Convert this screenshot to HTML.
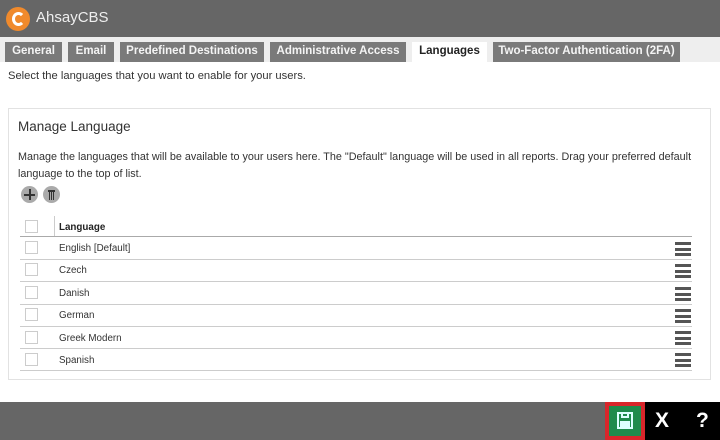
<!DOCTYPE html>
<html><head><style>
*{margin:0;padding:0;box-sizing:border-box}
body{width:720px;height:440px;overflow:hidden;background:#fff;font-family:"Liberation Sans",Arial,sans-serif;position:relative;color:#333}
.hdr{position:absolute;left:0;top:0;width:720px;height:37px;background:#666}
.logo{position:absolute;left:6px;top:7px;width:24px;height:24px;border-radius:50%;background:#f08a2c}
.brand{position:absolute;left:36px;top:9px;font-size:15px;color:#eee}
.tabbar{position:absolute;left:0;top:37px;width:720px;height:25px;background:#eee}
.tab{position:absolute;top:42px;height:20px;background:#7a7a7a;color:#f4f4f4;font-weight:bold;font-size:11.5px;line-height:19px;text-align:center}
.tab.on{background:#fff;color:#222}
.sel{position:absolute;left:8px;top:70px;font-size:11.2px;color:#333}
.panel{position:absolute;left:8px;top:108px;width:703px;height:272px;border:1px solid #e2e2e2}
.t{position:absolute;left:18px;top:119px;font-size:13.5px;color:#333}
.d{position:absolute;left:18px;top:149px;font-size:10.8px;line-height:17px;color:#333;width:690px}
.ic{position:absolute;top:186px;width:17px;height:17px;border-radius:50%;background:#aaa}
.line{position:absolute;left:20px;width:672px;height:1px;background:#ccc}
.cb{position:absolute;left:25px;width:13px;height:13px;border:1px solid #ccc;background:#fff}
.lt{position:absolute;left:59px;font-size:9.8px;color:#333}
.hb{position:absolute;left:675px;width:16px}
.hb i{display:block;height:3px;background:#555;margin-bottom:2.5px}
.ftr{position:absolute;left:0;top:402px;width:720px;height:38px;background:#666}
</style></head><body>
<div class="hdr"></div>
<div class="logo"><div style="position:absolute;left:6px;top:5px;width:13px;height:14px;border:3.5px solid #fff;border-right-color:transparent;border-radius:50%"></div></div>
<div class="brand">AhsayCBS</div>
<div class="tabbar"></div>
<div class="tab" style="left:5px;width:57px">General</div>
<div class="tab" style="left:68px;width:46px">Email</div>
<div class="tab" style="left:120px;width:144px">Predefined Destinations</div>
<div class="tab" style="left:270px;width:136px">Administrative Access</div>
<div class="tab on" style="left:412px;width:75px">Languages</div>
<div class="tab" style="left:493px;width:187px">Two-Factor Authentication (2FA)</div>
<div class="sel">Select the languages that you want to enable for your users.</div>
<div class="panel"></div>
<div class="t">Manage Language</div>
<div class="d">Manage the languages that will be available to your users here. The "Default" language will be used in all reports. Drag your preferred default language to the top of list.</div>
<div class="ic" style="left:21px"><div style="position:absolute;left:3px;top:7.5px;width:11px;height:2px;background:#333"></div><div style="position:absolute;left:7.5px;top:3px;width:2px;height:11px;background:#333"></div></div>
<div class="ic" style="left:43px"><div style="position:absolute;left:5px;top:4px;width:7px;height:2px;background:#333"></div><div style="position:absolute;left:5.5px;top:6px;width:6px;height:8px;background:repeating-linear-gradient(90deg,#333 0 1px,#aaa 1px 2px)"></div></div>
<div class="cb" style="top:220px"></div>
<div style="position:absolute;left:54px;top:216px;width:1px;height:20px;background:#ccc"></div>
<div class="lt" style="top:222px;font-weight:bold;color:#222">Language</div>
<div class="line" style="top:236px;background:#aaa"></div>

<div class="cb" style="top:241px"></div><div class="lt" style="top:243px">English [Default]</div><div class="hb" style="top:242px"><i></i><i></i><i></i></div><div class="line" style="top:259px"></div>
<div class="cb" style="top:263px"></div><div class="lt" style="top:265px">Czech</div><div class="hb" style="top:264px"><i></i><i></i><i></i></div><div class="line" style="top:281px"></div>
<div class="cb" style="top:286px"></div><div class="lt" style="top:288px">Danish</div><div class="hb" style="top:287px"><i></i><i></i><i></i></div><div class="line" style="top:304px"></div>
<div class="cb" style="top:308px"></div><div class="lt" style="top:310px">German</div><div class="hb" style="top:309px"><i></i><i></i><i></i></div><div class="line" style="top:326px"></div>
<div class="cb" style="top:331px"></div><div class="lt" style="top:333px">Greek Modern</div><div class="hb" style="top:331px"><i></i><i></i><i></i></div><div class="line" style="top:348px"></div>
<div class="cb" style="top:353px"></div><div class="lt" style="top:355px">Spanish</div><div class="hb" style="top:353px"><i></i><i></i><i></i></div><div class="line" style="top:370px"></div>

<div class="ftr"></div>
<div style="position:absolute;left:605px;top:402px;width:40px;height:38px;background:#d9262b"></div>
<div style="position:absolute;left:609px;top:406px;width:32px;height:30px;background:#1e8b4c"></div>
<div style="position:absolute;left:617px;top:412px;width:16px;height:17px;border:2px solid #dff;background:#1e8b4c"><div style="position:absolute;left:2px;top:-2px;width:8px;height:6px;border:2px solid #dff;border-top:none"></div><div style="position:absolute;left:1px;top:7px;width:10px;height:6px;background:#dff"></div></div>
<div style="position:absolute;left:645px;top:402px;width:75px;height:38px;background:#000"></div>
<div style="position:absolute;left:655px;top:409px;font-size:21px;font-weight:bold;color:#fff">X</div>
<div style="position:absolute;left:696px;top:409px;font-size:21px;font-weight:bold;color:#fff">?</div>
</body></html>
